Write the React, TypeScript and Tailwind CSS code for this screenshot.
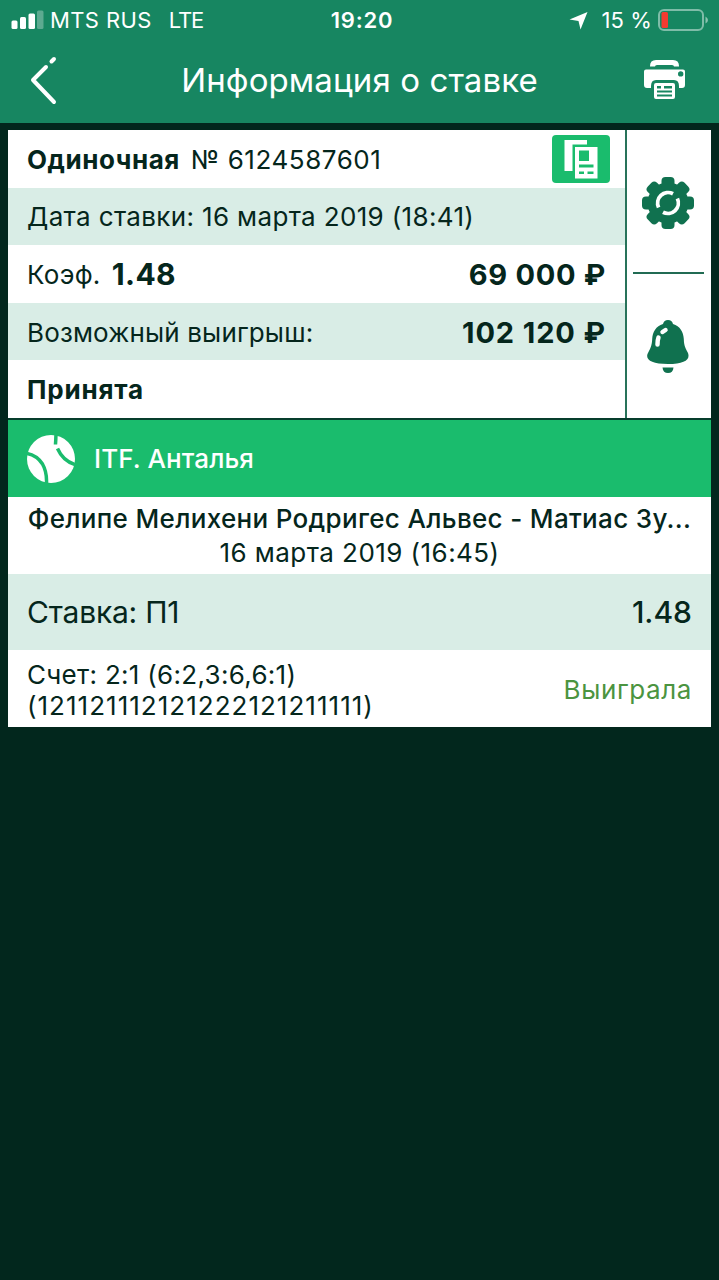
import type { ReactNode } from 'react';

function StatusBar() {
  return (
    <div className="grid h-10 grid-cols-3 items-center px-[11px] text-[22px] leading-none">
      <div className="flex items-center whitespace-nowrap">
        <svg width="33" height="20" viewBox="0 0 33 20" fill="#fff">
          <rect x="0.500" y="10.500" width="6" height="8.500" rx="1.5" />
          <rect x="9" y="7" width="6" height="12" rx="1.5" />
          <rect x="17.500" y="3.500" width="6.500" height="15.500" rx="1.5" />
          <rect x="26" y="0.500" width="6.500" height="18.500" rx="1.5" opacity="0.3" />
        </svg>
        <span className="ml-[6px] tracking-[0.4px]">MTS RUS</span>
        <span className="ml-[17px] tracking-[-1.2px]">LTE</span>
      </div>
      <div className="pl-[5px] text-center font-semibold tracking-[0.8px]">19:20</div>
      <div className="flex items-center justify-end whitespace-nowrap">
        <svg width="19" height="19" viewBox="0 0 19 19" fill="#fff">
          <path d="M18.500 1 11.500 18.500 9.500 10 0.500 8.500Z" />
        </svg>
        <span className="ml-[13px] tracking-[0.1px]">15 %</span>
        <svg className="ml-[5px]" width="51" height="24" viewBox="0 0 51 24">
          <rect x="2" y="2" width="44" height="20" rx="5" fill="none" stroke="#fff" strokeOpacity="0.45" strokeWidth="2" />
          <rect x="4.500" y="4" width="6.500" height="16" rx="1.5" fill="#f53b30" />
          <path d="M48.500 8.500Q51 10 51 12T48.500 15.500Z" fill="#fff" opacity="0.5" />
        </svg>
      </div>
    </div>
  );
}

function PrinterIcon() {
  return (
    <svg width="44" height="42" viewBox="0 0 44 42" fill="#fff">
      <path d="M7 7V7Q7 1 13 1H30Q36 1 36 7V7.500H31Q31 6 29 6H14Q12 6 12 7.500H7Z" />
      <path fillRule="evenodd" d="M3 10.500H40Q42 10.500 42 12.500V26Q42 29 39 29H36V27Q36 21 31 21H13Q8 21 8 27V29H4Q1 29 1 26V12.500Q1 10.500 3 10.500ZM37.700 12.200A2.700 2.700 0 1 0 37.700 17.600A2.700 2.700 0 1 0 37.700 12.200Z" />
      <path fillRule="evenodd" d="M13 24H30Q32 24 32 26V38Q32 40 30 40H13Q11 40 11 38V26Q11 24 13 24ZM14 27V29.500H18V27ZM21 27V29.500H29V27ZM14 31.500V33.500H29V31.500ZM14 35.500V37.500H29V35.500Z" />
    </svg>
  );
}

function Header() {
  return (
    <header className="h-[123px] bg-[#178661] text-white">
      <StatusBar />
      <div className="grid h-20 grid-cols-[88px_1fr_88px] items-center">
        <svg className="ml-[29px]" width="30" height="52" viewBox="0 0 30 52" fill="none" stroke="#fff" strokeWidth="4" strokeLinecap="round" strokeLinejoin="round">
          <path d="M17 13 4 26 25 48" />
          <path d="M22.500 7.500 25 5" />
        </svg>
        <h1 className="pt-px text-center text-[33px] leading-none tracking-[0.1px]">Информация о ставке</h1>
        <div className="ml-[12px]">
          <PrinterIcon />
        </div>
      </div>
    </header>
  );
}

function CopyIcon() {
  return (
    <svg width="58" height="48" viewBox="0 0 58 48">
      <rect width="58" height="48" rx="4" fill="#1abc6d" />
      <path d="M12.500 5H35V9.500H20.500V36H12.500Z" fill="#fff" />
      <path fill="#fff" fillRule="evenodd" d="M23 12H45.500V43.500H23ZM27 15.500V26H37V15.500ZM27 29.500V32.500H41.500V29.500ZM27 36.500V39H32V36.500ZM35.500 36.500V39H41.500V36.500Z" />
    </svg>
  );
}

function GearIcon() {
  return (
    <svg width="54" height="54" viewBox="0 0 54 54">
      <g fill="#10714f">
        <circle cx="27" cy="27" r="20.500" />
        <rect x="20.500" y="1" width="13" height="52" rx="4" />
        <rect x="20.500" y="1" width="13" height="52" rx="4" transform="rotate(45 27 27)" />
        <rect x="20.500" y="1" width="13" height="52" rx="4" transform="rotate(90 27 27)" />
        <rect x="20.500" y="1" width="13" height="52" rx="4" transform="rotate(135 27 27)" />
      </g>
      <g fill="none" stroke="#fff" strokeWidth="3.800">
        <path d="M17.600 31.500A10.500 10.500 0 0 1 32 17.800" />
        <path d="M36.400 22.500A10.500 10.500 0 0 1 22 36.200" />
      </g>
    </svg>
  );
}

function BellIcon() {
  return (
    <svg width="44" height="56" viewBox="0 0 44 56">
      <path fill="#10714f" d="M22 1Q26 1 27 5C34 7 37.500 13 37.800 20C38 27 39.500 29 42 34C44.500 41 38 45 22 45S-.5 41 1.500 35C4 30 6 27 6.200 20C6.500 13 10 7 17 5Q18 1 22 1Z" />
      <path fill="#10714f" d="M16.500 48.500H27.500Q27 54 22 54T16.500 48.500Z" />
      <g fill="none" stroke="#fff" strokeLinecap="round">
        <path d="M16.500 13 19.500 11" strokeWidth="4.500" />
        <path d="M12.500 18.500Q11.500 21 11.500 25.500" strokeWidth="4.500" />
      </g>
    </svg>
  );
}

function TennisIcon() {
  return (
    <svg width="48" height="48" viewBox="0 0 48 48">
      <circle cx="24" cy="24" r="24" fill="#fff" />
      <g fill="none" stroke="#1abc6d" strokeWidth="3.500">
        <path d="M0 18.500Q10 20.500 15.500 29Q20 37 19.500 48" />
        <path d="M29 0 28.500 9.500" />
        <path d="M30.500 13.500Q36 26 48 29.500" />
      </g>
    </svg>
  );
}

function Row({ shaded = false, children }: { shaded?: boolean; children: ReactNode }) {
  return (
    <div className={`flex flex-1 items-center pl-[19px] pr-5 ${shaded ? 'bg-[#d9ede6]' : 'bg-white'}`}>
      {children}
    </div>
  );
}

export default function App() {
  return (
    <div className="min-h-screen w-full bg-[#02271d] font-['Inter','Liberation_Sans',sans-serif] text-[26px] leading-none text-[#05261c]">
      <Header />

      <main className="mx-2 mt-[7px] h-[597px] bg-white">
        {/* Coupon summary */}
        <section className="flex h-[290px] border-b-2 border-[#063d2c]">
          <div className="flex w-[617px] flex-col">
            <Row>
              <span className="pt-0.5 font-bold tracking-[0.55px]">Одиночная</span>
              <span className="ml-[11px] pt-0.5 tracking-[0.55px]">№ 6124587601</span>
              <div className="ml-auto -mr-[5px]">
                <CopyIcon />
              </div>
            </Row>
            <Row shaded>
              <span className="pt-0.5 tracking-[0.35px]">Дата ставки: 16 марта 2019 (18:41)</span>
            </Row>
            <Row>
              <span className="pt-0.5 tracking-[0.3px]">Коэф.</span>
              <span className="ml-[11px] pt-px text-[30px] font-bold tracking-[0.4px]">1.48</span>
              <span className="-mr-px ml-auto pt-px text-[29px] font-bold tracking-[0.7px]">69 000 ₽</span>
            </Row>
            <Row shaded>
              <span className="pt-0.5 tracking-[0.15px]">Возможный выигрыш:</span>
              <span className="-mr-px ml-auto pt-px text-[29px] font-bold tracking-[0.9px]">102 120 ₽</span>
            </Row>
            <Row>
              <span className="pt-0.5 font-bold tracking-[0.8px]">Принята</span>
            </Row>
          </div>
          <div className="flex flex-1 flex-col border-l-2 border-[#28735a] pl-[6px] pr-[7px]">
            <div className="flex h-[144px] items-center justify-center border-b-2 border-[#216b53] pr-[2px] pt-[3px]">
              <GearIcon />
            </div>
            <div className="flex flex-1 items-center justify-center pr-[2px] pt-[2px]">
              <BellIcon />
            </div>
          </div>
        </section>

        {/* Event */}
        <section>
          <div className="flex h-[77px] items-center bg-[#1abc6d] pl-[19px] font-medium text-white">
            <TennisIcon />
            <span className="ml-[19px] tracking-[0.1px]">ITF. Анталья</span>
          </div>
          <div className="flex h-[77px] flex-col items-center pt-1">
            <p className="whitespace-nowrap font-medium leading-[35px] tracking-[0.33px]">
              Фелипе Мелихени Родригес Альвес - Матиас Зу...
            </p>
            <p className="leading-[34px] tracking-[0.45px]">16 марта 2019 (16:45)</p>
          </div>
          <div className="flex h-[76px] items-center justify-between bg-[#d9ede6] px-[19px] text-[30px]">
            <span className="tracking-[-0.2px]">Ставка: П1</span>
            <span className="font-medium">1.48</span>
          </div>
          <div className="flex h-[77px] items-center justify-between px-[19px] pt-0.5">
            <div className="leading-[31px]">
              <p className="tracking-[0.3px]">Счет: 2:1 (6:2,3:6,6:1)</p>
              <p className="tracking-[1.02px]">(121121112121222121211111)</p>
            </div>
            <span className="tracking-[0.6px] text-[#4b9440]">Выиграла</span>
          </div>
        </section>
      </main>
    </div>
  );
}
